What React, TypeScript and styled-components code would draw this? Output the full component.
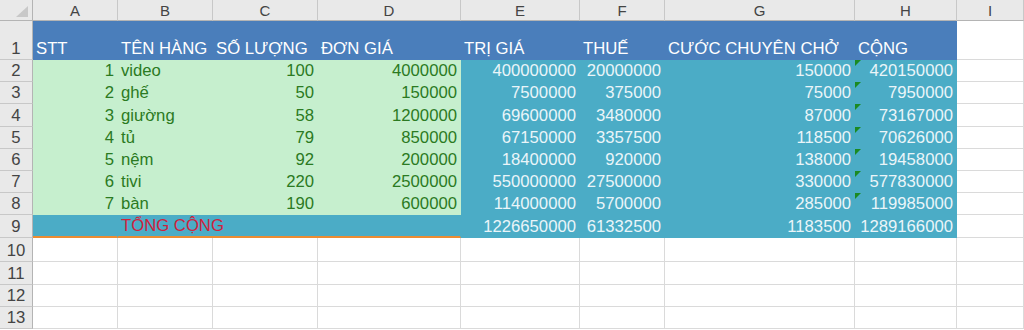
import React from "react";
import styled, { createGlobalStyle, css } from "styled-components";

const GlobalStyle = createGlobalStyle`
  html, body {
    margin: 0;
    padding: 0;
    background: #ffffff;
    font-family: "Liberation Sans", Arial, sans-serif;
  }
`;

const BLUE = "#4a7ebb";
const GREEN = "#c6efce";
const TEAL = "#4bacc6";
const GRID = "#dadada";

const Sheet = styled.div`
  display: grid;
  grid-template-columns: 33px 85px 95px 105px 143px 119px 85px 190px 102px 1fr;
  grid-template-rows: 21px 39px 22px 22px 23px 22px 22px 22px 22px 23px 24px 23px 22px 22px;
  width: 1024px;
  height: 330px;
  overflow: hidden;
  font-size: 16.7px;
`;

const Corner = styled.div`
  background: #e9e9e9;
  border-right: 1px solid #b4b4b4;
  border-bottom: 1px solid #b4b4b4;
  display: flex;
  align-items: flex-end;
  justify-content: flex-end;
  padding: 0 4px 3px 0;
  box-sizing: border-box;
`;

const ColHeader = styled.div`
  background: #e9e9e9;
  border-right: 1px solid #c8c8c8;
  border-bottom: 1px solid #b4b4b4;
  color: #444;
  font-size: 15px;
  display: flex;
  align-items: center;
  justify-content: center;
  box-sizing: border-box;
`;

const RowHeader = styled.div`
  background: #e9e9e9;
  border-right: 1px solid #b4b4b4;
  border-bottom: 1px solid #c8c8c8;
  color: #444;
  display: flex;
  align-items: flex-end;
  justify-content: center;
  box-sizing: border-box;
`;

type CellProps = {
  $fill?: string;
  $color?: string;
  $align?: "left" | "right";
  $span?: number;
  $underline?: boolean;
  $mark?: boolean;
};

const Cell = styled.div<CellProps>`
  position: relative;
  display: flex;
  align-items: flex-end;
  justify-content: ${(p) => (p.$align === "right" ? "flex-end" : "flex-start")};
  padding: 0 3px 0 3px;
  box-sizing: border-box;
  min-width: 0;
  white-space: nowrap;
  background: ${(p) => p.$fill ?? "#ffffff"};
  color: ${(p) => p.$color ?? "#000"};
  border-right: 1px solid ${(p) => p.$fill ?? GRID};
  border-bottom: ${(p) =>
    p.$underline ? "2px solid #ec8c32" : `1px solid ${p.$fill ?? GRID}`};
  ${(p) => p.$span && css`grid-column: span ${p.$span};`}
  ${(p) =>
    p.$mark &&
    css`
      &::before {
        content: "";
        position: absolute;
        left: 0;
        top: 0;
        border-top: 6px solid #1b8a22;
        border-right: 6px solid transparent;
      }
    `}
`;

const GREEN_TEXT = "#2b7a22";
const LIGHT_TEXT = "#eaf5f9";
const RED_TEXT = "#d1213c";

const columns = ["A", "B", "C", "D", "E", "F", "G", "H", "I"];
const titles = ["STT", "TÊN HÀNG", "SỐ LƯỢNG", "ĐƠN GIÁ", "TRỊ GIÁ", "THUẾ", "CƯỚC CHUYÊN CHỞ", "CỘNG"];

const items: [number, string, number, number, number, number, number, number][] = [
  [1, "video", 100, 4000000, 400000000, 20000000, 150000, 420150000],
  [2, "ghế", 50, 150000, 7500000, 375000, 75000, 7950000],
  [3, "giường", 58, 1200000, 69600000, 3480000, 87000, 73167000],
  [4, "tủ", 79, 850000, 67150000, 3357500, 118500, 70626000],
  [5, "nệm", 92, 200000, 18400000, 920000, 138000, 19458000],
  [6, "tivi", 220, 2500000, 550000000, 27500000, 330000, 577830000],
  [7, "bàn", 190, 600000, 114000000, 5700000, 285000, 119985000],
];

const totals = [1226650000, 61332500, 1183500, 1289166000];

function CornerMark() {
  return (
    <svg width="12" height="11" viewBox="0 0 12 11">
      <polygon points="12,0 12,11 0,11" fill="#c8c8c8" />
    </svg>
  );
}

export default function App() {
  return (
    <>
      <GlobalStyle />
      <Sheet>
        <Corner>
          <CornerMark />
        </Corner>
        {columns.map((c) => (
          <ColHeader key={c}>{c}</ColHeader>
        ))}

        <RowHeader>1</RowHeader>
        {titles.map((t) => (
          <Cell key={t} $fill={BLUE} $color="#ffffff">
            {t}
          </Cell>
        ))}
        <Cell />

        {items.map((r, i) => (
          <React.Fragment key={r[0]}>
            <RowHeader>{i + 2}</RowHeader>
            <Cell $fill={GREEN} $color={GREEN_TEXT} $align="right">
              {r[0]}
            </Cell>
            <Cell $fill={GREEN} $color={GREEN_TEXT}>
              {r[1]}
            </Cell>
            <Cell $fill={GREEN} $color={GREEN_TEXT} $align="right">
              {r[2]}
            </Cell>
            <Cell $fill={GREEN} $color={GREEN_TEXT} $align="right">
              {r[3]}
            </Cell>
            <Cell $fill={TEAL} $color={LIGHT_TEXT} $align="right">
              {r[4]}
            </Cell>
            <Cell $fill={TEAL} $color={LIGHT_TEXT} $align="right">
              {r[5]}
            </Cell>
            <Cell $fill={TEAL} $color={LIGHT_TEXT} $align="right">
              {r[6]}
            </Cell>
            <Cell $fill={TEAL} $color={LIGHT_TEXT} $align="right" $mark>
              {r[7]}
            </Cell>
            <Cell />
          </React.Fragment>
        ))}

        <RowHeader>9</RowHeader>
        <Cell $fill={TEAL} $underline />
        <Cell $fill={TEAL} $color={RED_TEXT} $span={3} $underline>
          TỔNG CỘNG
        </Cell>
        {totals.map((v) => (
          <Cell key={v} $fill={TEAL} $color={LIGHT_TEXT} $align="right">
            {v}
          </Cell>
        ))}
        <Cell />

        {[10, 11, 12, 13].map((n) => (
          <React.Fragment key={n}>
            <RowHeader>{n}</RowHeader>
            {columns.map((c) => (
              <Cell key={c} />
            ))}
          </React.Fragment>
        ))}
      </Sheet>
    </>
  );
}
